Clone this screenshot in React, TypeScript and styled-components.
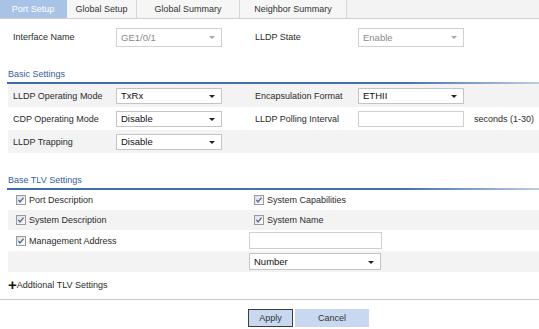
import React from "react";
import styled, { createGlobalStyle, css } from "styled-components";

const Global = createGlobalStyle`
  html, body { margin: 0; padding: 0; background: #fff; }
  body { font-family: "Liberation Sans", Arial, sans-serif; }
`;

const Page = styled.div`
  width: 539px;
  height: 329px;
  overflow: hidden;
  font-size: 9px;
  color: #2b2b2b;
  background: #fff;
`;

const TabBar = styled.div`
  display: flex;
  height: 18px;
  background: #f3f3f3;
  border-bottom: 1px solid #cfcfcf;
`;

const Tab = styled.div<{ $active?: boolean; $w: number }>`
  width: ${(p) => p.$w}px;
  box-sizing: border-box;
  display: flex;
  align-items: center;
  justify-content: center;
  border-right: 1px solid #d6d6d6;
  color: #333;
  background: #f6f6f6;
  ${(p) =>
    p.$active &&
    css`
      background: #a9c3e7;
      color: #fff;
      border-right-color: #a9c3e7;
    `}
`;

const Grid = styled.div<{ $h: number; $shade?: boolean }>`
  display: grid;
  grid-template-columns: 103px 139px 103px 1fr;
  align-items: center;
  height: ${(p) => p.$h}px;
  padding-left: 5px;
  background: ${(p) => (p.$shade ? "#f3f3f3" : "transparent")};
`;

const TopRow = styled(Grid)`
  margin-top: 8px;
  padding-left: 13px;
`;

const Section = styled.div<{ $top: number }>`
  margin-left: 8px;
  margin-top: ${(p) => p.$top}px;
`;

const SectionHeader = styled.div`
  height: 17px;
  display: flex;
  align-items: center;
  color: #35609c;
  position: relative;
  &::after {
    content: "";
    position: absolute;
    left: -1px;
    right: 0;
    bottom: -2px;
    height: 2px;
    background: linear-gradient(to right, #3f6ca8 0%, #4672ad 75%, #b9cde6 100%);
  }
  margin-bottom: 2px;
`;

const Label = styled.span`
  white-space: nowrap;
`;

const SelectBox = styled.div<{ $w: number; $disabled?: boolean; $h?: number }>`
  width: ${(p) => p.$w}px;
  height: ${(p) => p.$h ?? 16}px;
  box-sizing: border-box;
  border: 1px solid ${(p) => (p.$disabled ? "#d0d0d0" : "#c4c4c4")};
  background: #fff;
  display: flex;
  align-items: center;
  padding-left: 4px;
  font-size: 9.5px;
  color: ${(p) => (p.$disabled ? "#8a8a8a" : "#111")};
  position: relative;
  &::after {
    content: "";
    position: absolute;
    right: 6px;
    top: 50%;
    margin-top: -1px;
    border-left: 3px solid transparent;
    border-right: 3px solid transparent;
    border-top: 3px solid ${(p) => (p.$disabled ? "#a8a8a8" : "#222")};
  }
`;

const TextInput = styled.div<{ $w: number; $h?: number }>`
  width: ${(p) => p.$w}px;
  height: ${(p) => p.$h ?? 16}px;
  box-sizing: border-box;
  border: 1px solid #cfcfcf;
  background: #fff;
`;

const InputWithUnit = styled.div`
  display: flex;
  align-items: center;
  gap: 10px;
`;

const TlvRow = styled.div<{ $h: number; $shade?: boolean }>`
  display: grid;
  grid-template-columns: 233px 1fr;
  align-items: center;
  height: ${(p) => p.$h}px;
  padding-left: 8px;
  background: ${(p) => (p.$shade ? "#f3f3f3" : "transparent")};
`;

const CheckItem = styled.label<{ $indent?: number }>`
  display: flex;
  align-items: center;
  gap: 3px;
  margin-left: ${(p) => p.$indent ?? 0}px;
  white-space: nowrap;
`;

const More = styled.div`
  margin-top: 4px;
  margin-left: 8px;
  height: 18px;
  display: flex;
  align-items: center;
`;

const Plus = styled.span`
  font-size: 15px;
  font-weight: bold;
  color: #111;
  line-height: 1;
  margin-top: -1px;
`;

const Divider = styled.div`
  margin-top: 5px;
  height: 1px;
  background: #c9c9c9;
`;

const ButtonBar = styled.div`
  display: flex;
  gap: 2px;
  padding-left: 248px;
  margin-top: 9px;
`;

const Button = styled.div<{ $w: number; $primary?: boolean }>`
  width: ${(p) => p.$w}px;
  height: 18px;
  box-sizing: border-box;
  display: flex;
  align-items: center;
  justify-content: center;
  background: #c8d8f0;
  color: #333;
  border: 1px solid ${(p) => (p.$primary ? "#3d3d3d" : "#c8d8f0")};
`;

const CheckIcon = () => (
  <svg width="10" height="10" viewBox="0 0 10 10">
    <defs>
      <linearGradient id="cbg" x1="0" y1="0" x2="1" y2="1">
        <stop offset="0" stopColor="#dcdcdc" />
        <stop offset="1" stopColor="#ffffff" />
      </linearGradient>
    </defs>
    <rect x="0.5" y="0.5" width="9" height="9" fill="url(#cbg)" stroke="#9a9a9a" />
    <path d="M2.4 4.9 L4 7 L7.6 2.6" fill="none" stroke="#4a6a9a" strokeWidth="1.3" />
  </svg>
);

const tabs = [
  { name: "Port Setup", w: 67, active: true },
  { name: "Global Setup", w: 70 },
  { name: "Global Summary", w: 103 },
  { name: "Neighbor Summary", w: 107 },
];

export default function App() {
  return (
    <>
      <Global />
      <Page>
        <TabBar>
          {tabs.map((t) => (
            <Tab key={t.name} $w={t.w} $active={t.active}>
              {t.name}
            </Tab>
          ))}
        </TabBar>

        <TopRow $h={20}>
          <Label>Interface Name</Label>
          <SelectBox $w={106} $h={19} $disabled>
            GE1/0/1
          </SelectBox>
          <Label>LLDP State</Label>
          <SelectBox $w={106} $h={19} $disabled>
            Enable
          </SelectBox>
        </TopRow>

        <Section $top={18}>
          <SectionHeader>Basic Settings</SectionHeader>
          <Grid $h={23} $shade>
            <Label>LLDP Operating Mode</Label>
            <SelectBox $w={106}>TxRx</SelectBox>
            <Label>Encapsulation Format</Label>
            <SelectBox $w={106}>ETHII</SelectBox>
          </Grid>
          <Grid $h={23}>
            <Label>CDP Operating Mode</Label>
            <SelectBox $w={106}>Disable</SelectBox>
            <Label>LLDP Polling Interval</Label>
            <InputWithUnit>
              <TextInput $w={106} />
              <Label>seconds (1-30)</Label>
            </InputWithUnit>
          </Grid>
          <Grid $h={23} $shade>
            <Label>LLDP Trapping</Label>
            <SelectBox $w={106}>Disable</SelectBox>
          </Grid>
        </Section>

        <Section $top={18}>
          <SectionHeader>Base TLV Settings</SectionHeader>
          <TlvRow $h={20}>
            <CheckItem>
              <CheckIcon />
              Port Description
            </CheckItem>
            <CheckItem $indent={5}>
              <CheckIcon />
              System Capabilities
            </CheckItem>
          </TlvRow>
          <TlvRow $h={20} $shade>
            <CheckItem>
              <CheckIcon />
              System Description
            </CheckItem>
            <CheckItem $indent={5}>
              <CheckIcon />
              System Name
            </CheckItem>
          </TlvRow>
          <TlvRow $h={21}>
            <CheckItem>
              <CheckIcon />
              Management Address
            </CheckItem>
            <TextInput $w={133} $h={17} />
          </TlvRow>
          <TlvRow $h={21} $shade>
            <span />
            <SelectBox $w={132} $h={17}>
              Number
            </SelectBox>
          </TlvRow>
        </Section>

        <More>
          <Plus>+</Plus>
          <Label>Addtional TLV Settings</Label>
        </More>
        <Divider />

        <ButtonBar>
          <Button $w={45} $primary>
            Apply
          </Button>
          <Button $w={74}>Cancel</Button>
        </ButtonBar>
      </Page>
    </>
  );
}
